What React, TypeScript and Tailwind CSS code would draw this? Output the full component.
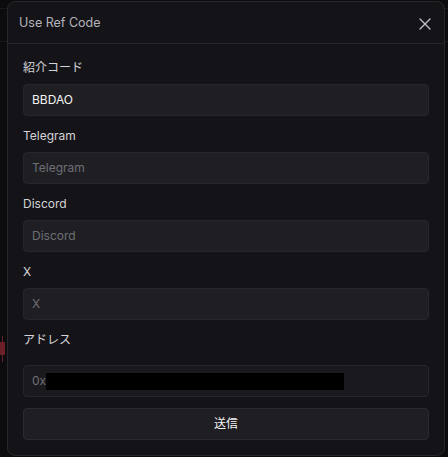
import React from "react";

function Field({ label, placeholder, value }: { label: string; placeholder?: string; value?: string }) {
  return (
    <div className="flex flex-col gap-[7px]">
      <div className="text-[12px] leading-[18px] text-[#d4d4d8]">{label}</div>
      <div className="h-[32px] rounded-[4px] border border-[#26262b] bg-[#1f1f23] px-2 flex items-center text-[12px]">
        {value ? (
          <span className="text-[#f4f4f5]">{value}</span>
        ) : (
          <span className="text-[#6e6e75]">{placeholder}</span>
        )}
      </div>
    </div>
  );
}

export default function App() {
  return (
    <div
      className="relative w-[448px] h-[457px] overflow-hidden bg-[#0c0c0e] pt-[1px] pl-[7px]"
      style={{ fontFamily: "Inter, 'Noto Sans CJK JP', sans-serif" }}
    >
      {/* background chart bits */}
      <div className="absolute left-0 top-[8px] w-[448px] h-[1px] bg-[#1a1a1d]" />
      <div className="absolute left-0 top-[41px] w-[448px] h-[1px] bg-[#1a1a1d]" />
      <div className="absolute left-[2px] top-[336px] w-[1px] h-[26px] bg-[#6b1f28]" />
      <div className="absolute left-0 top-[342px] w-[5px] h-[13px] bg-[#6b1f28]" />

      <div className="relative w-[438px] h-[455px] rounded-[8px] border border-[#27272b] bg-[#141418] flex flex-col">
        <div className="h-[42px] shrink-0 border-b border-[#26262a] flex items-center justify-between pl-[11px] pr-[13px] pt-[2px]">
          <span className="text-[12.5px] text-[#b4b4ba]">Use Ref Code</span>
          <svg width="12" height="12" viewBox="0 0 12 12" fill="none" stroke="#c4c4ca" strokeWidth="1.3" strokeLinecap="round">
            <path d="M1 1L11 11M11 1L1 11" />
          </svg>
        </div>
        <div className="flex flex-col px-[15px] pt-[15px] gap-[11px]">
          <Field label="紹介コード" value="BBDAO" />
          <Field label="Telegram" placeholder="Telegram" />
          <Field label="Discord" placeholder="Discord" />
          <Field label="X" placeholder="X" />
          <div className="flex flex-col gap-[16px]">
            <div className="text-[12px] leading-[18px] text-[#d4d4d8]">アドレス</div>
            <div className="h-[32px] rounded-[4px] border border-[#26262b] bg-[#1a1a1e] px-2 flex items-center text-[12px]">
              <span className="text-[#6e6e75]">0x</span>
              <div className="w-[298px] h-[17px] bg-black" />
            </div>
          </div>
          <button className="h-[32px] rounded-[4px] border border-[#2a2a2f] bg-[#1f1f23] text-[12px] text-[#f4f4f5] flex items-center justify-center">
            送信
          </button>
        </div>
      </div>
    </div>
  );
}
